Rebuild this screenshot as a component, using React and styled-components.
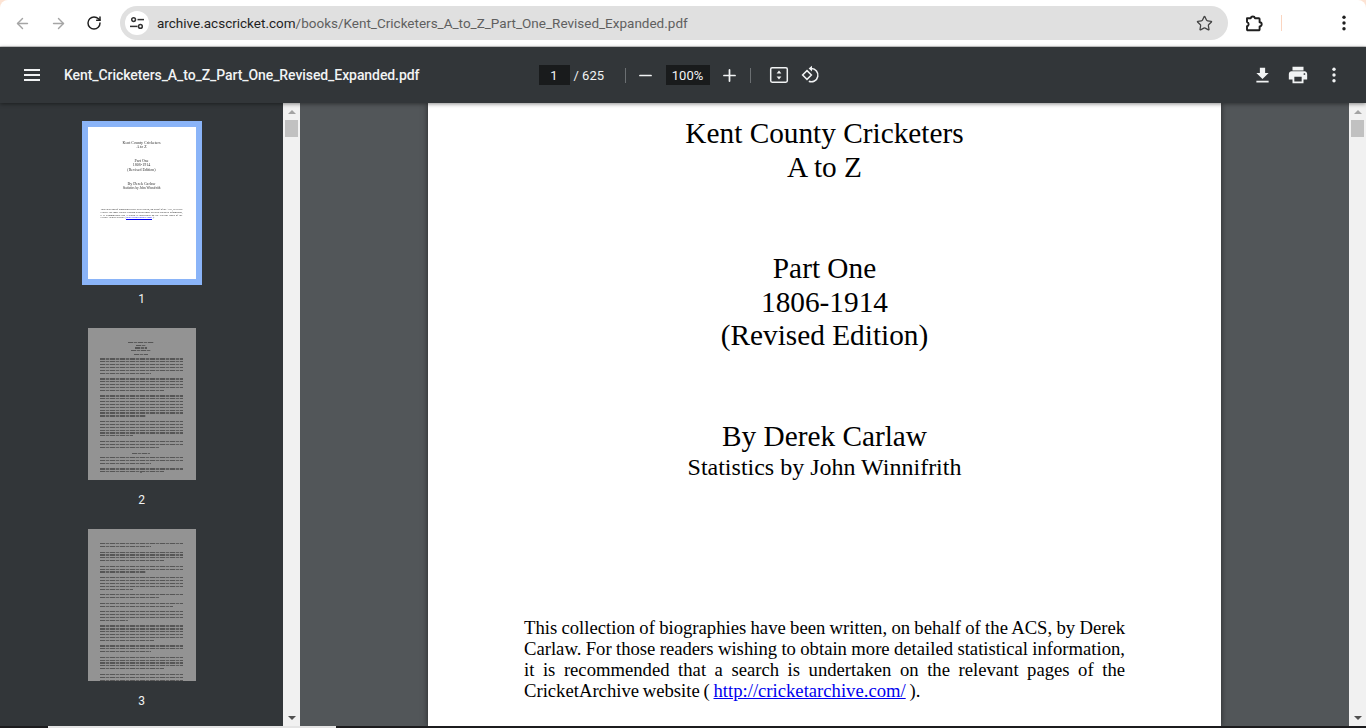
import React from 'react';
import styled, { createGlobalStyle } from 'styled-components';
import { ArrowLeft, ArrowRight, RotateCw, Star, Minus, Plus } from 'lucide-react';

const Global = createGlobalStyle`
  html, body { margin: 0; height: 100%; overflow: hidden; background: #fde3d3; }
  a { color: #0000ee; }
`;

const Shell = styled.div`
  width: 1366px;
  height: 728px;
  display: flex;
  flex-direction: column;
  overflow: hidden;
  font-family: "Roboto", "Liberation Sans", sans-serif;
`;

const BrowserBar = styled.div`
  height: 46px;
  flex: none;
  display: flex;
  align-items: center;
  background: #fff;
  border-bottom: 1px solid #d0d0d0;
  border-top-left-radius: 8px;
  border-top-right-radius: 8px;
`;

const NavButton = styled.div`
  width: 36px;
  height: 36px;
  flex: none;
  margin-left: ${p => p.$ml || 0}px;
  display: flex;
  align-items: center;
  justify-content: center;
  color: ${p => (p.$dim ? '#a5a5a5' : '#1f1f1f')};
`;

const NavGroup = styled.div`
  display: flex;
  padding-left: 4px;
`;

const Omnibox = styled.div`
  width: 1108px;
  height: 34px;
  margin-left: 8px;
  border-radius: 17px;
  background: #e0e0e0;
  display: flex;
  align-items: center;
  padding: 0 15px 0 5px;
  box-sizing: border-box;
`;

const SiteChip = styled.div`
  width: 24px;
  height: 24px;
  border-radius: 50%;
  background: #fff;
  display: flex;
  align-items: center;
  justify-content: center;
  flex: none;
`;

const Url = styled.div`
  margin-left: 8px;
  font-size: 13.5px;
  color: #5f5f5f;
  flex: 1;
  white-space: nowrap;
  b { font-weight: 400; color: #1f1f1f; }
`;

const BrowserEnd = styled.div`
  display: flex;
  align-items: center;
  flex: 1;
`;

const ProfileMark = styled.div`
  width: 1px;
  height: 16px;
  background: #fbd5c0;
  margin-left: 9px;
  margin-right: 54px;
`;

const PdfBar = styled.div`
  height: 56px;
  flex: none;
  background: #323639;
  color: #fff;
  display: grid;
  grid-template-columns: 1fr auto 1fr;
  align-items: center;
  position: relative;
  z-index: 2;
  box-shadow: 0 1px 4px rgba(0, 0, 0, 0.45);
`;

const TitleBlock = styled.div`
  display: flex;
  align-items: center;
  padding-left: 24px;
`;

const Title = styled.div`
  margin-left: 24px;
  font-size: 14px;
  font-weight: 500;
  letter-spacing: -0.08px;
  color: #f1f3f4;
  white-space: nowrap;
`;

const Controls = styled.div`
  display: flex;
  align-items: center;
  margin-right: 4px;
  font-size: 13px;
  color: #f1f3f4;
`;

const NumBox = styled.div`
  width: ${p => p.$w}px;
  height: 20px;
  background: #191b1c;
  display: flex;
  align-items: center;
  justify-content: center;
  font-size: 13px;
  color: #f1f3f4;
`;

const Total = styled.div`
  margin-left: 4px;
  width: 51px;
  white-space: nowrap;
`;

const Rule = styled.div`
  width: 1px;
  height: 15px;
  background: #6b6f72;
`;

const IconSlot = styled.div`
  width: ${p => p.$w || 36}px;
  height: 36px;
  margin-left: ${p => p.$ml || 0}px;
  display: flex;
  align-items: center;
  justify-content: center;
  flex: none;
  color: #f1f3f4;
`;

const Actions = styled.div`
  display: flex;
  justify-content: flex-end;
  align-items: center;
  padding-right: 14px;
`;

const Body = styled.div`
  flex: 1;
  min-height: 0;
  display: flex;
  position: relative;
`;

const Sidebar = styled.div`
  width: 283px;
  flex: none;
  background: #323639;
  display: flex;
  flex-direction: column;
  align-items: center;
  padding-top: 18px;
  box-sizing: border-box;
  overflow: hidden;
`;

const ThumbItem = styled.div`
  display: flex;
  flex-direction: column;
  align-items: center;
  margin-bottom: 15px;
  color: #f1f3f4;
  font-size: 12px;
  line-height: 16px;
`;

const ThumbFrame = styled.div`
  padding: 6px;
  background: ${p => (p.$active ? '#8ab4f8' : 'transparent')};
  margin-bottom: 6px;
`;

const Thumb = styled.div`
  width: 108px;
  height: 152px;
  box-sizing: border-box;
  background: ${p => (p.$active ? '#fff' : '#939393')};
  font-family: "Liberation Serif", serif;
  color: #333;
  overflow: hidden;
`;

const MiniCenter = styled.div`
  text-align: center;
  font-size: 4px;
  line-height: 4.57px;
  margin-top: ${p => p.$top}px;
  white-space: nowrap;
  filter: blur(0.25px);
`;

const MiniSub = styled.span`
  font-size: 3.3px;
`;

const MiniPara = styled.div`
  margin: 18px 13px 0;
  font-size: 2.54px;
  line-height: 2.86px;
  word-spacing: -0.12px;
  text-align: justify;
  color: #222;
  filter: blur(0.2px);
  a {
    color: #0000ee;
    text-decoration: none;
    border-bottom: 0.8px solid #0000ee;
  }
`;

const Lines = styled.div`
  height: 100%;
  box-sizing: border-box;
  padding: 14px 13px 0 12px;
  display: flex;
  flex-direction: column;
  filter: blur(0.55px);
`;

const TextLine = styled.div`
  height: 1.2px;
  flex: none;
  margin-top: ${p => p.$gap}px;
  width: ${p => p.$w}%;
  align-self: ${p => (p.$center ? 'center' : 'flex-start')};
  background: repeating-linear-gradient(90deg, #565656 0 5px, #828282 5px 6px, #5e5e5e 6px 9px, #828282 9px 10px);
`;

const PageNumber = styled.div`
  width: 2px;
  height: 1.2px;
  background: #666;
  align-self: center;
  margin-top: auto;
  margin-bottom: 7px;
`;

const Scrollbar = styled.div`
  width: 17px;
  flex: none;
  background: #f1f1f1;
  display: flex;
  flex-direction: column;
  align-items: center;
`;

const ScrollThumb = styled.div`
  width: 13px;
  height: 17px;
  background: #c1c1c1;
`;

const ScrollArrow = styled.div`
  width: 0;
  height: 0;
  border-left: 4px solid transparent;
  border-right: 4px solid transparent;
  ${p => (p.$down
    ? 'border-top: 4px solid #505050; margin-top: auto; margin-bottom: 6px;'
    : 'border-bottom: 4px solid #a3a3a3; margin-top: 7px; margin-bottom: 6px;')}
`;

const Viewer = styled.div`
  flex: 1;
  background: #525659;
  display: flex;
  justify-content: center;
  overflow: hidden;
`;

const Page = styled.div`
  width: 793px;
  flex: none;
  background: #fff;
  box-shadow: 0 0 6px rgba(0, 0, 0, 0.55);
  font-family: "Liberation Serif", serif;
  color: #000;
  box-sizing: border-box;
  padding: 14px 96px 0;
  text-align: center;
`;

const Heading = styled.div`
  font-size: 29.3px;
  line-height: 33.6px;
  margin-top: ${p => p.$top || 0}px;
`;

const SubHeading = styled.div`
  font-size: 24px;
  line-height: 28px;
  margin-top: -1px;
`;

const Para = styled.p`
  margin: 136px 0 0;
  font-size: 18.67px;
  line-height: 21px;
  word-spacing: -0.9px;
  text-align: justify;
`;

const BottomStrip = styled.div`
  height: 2px;
  flex: none;
  background: #1c1c1e;
  position: relative;
  z-index: 3;
`;

const BottomTab = styled.div`
  width: 288px;
  height: 2px;
  margin-left: 48px;
  background: #e4e4e4;
`;

const SliderIcon = () => (
  <svg width="16" height="16" viewBox="0 0 16 16" fill="none" stroke="#333" strokeWidth="1.5">
    <circle cx="4.6" cy="4.6" r="1.9" />
    <path d="M8.5 4.6H15" />
    <circle cx="11.4" cy="11.4" r="1.9" />
    <path d="M1 11.4h7.5" />
  </svg>
);

const PuzzleIcon = () => (
  <svg width="20" height="20" viewBox="0 0 20 20" fill="none" stroke="#1f1f1f" strokeWidth="1.9" strokeLinejoin="round">
    <path d="M3 5.2h3.7a2.2 2.2 0 0 1 4.3 0h3.8a.8.8 0 0 1 .8.8v3.2a2.1 2.1 0 0 1 0 4.2v3a.8.8 0 0 1-.8.8H3.8a.8.8 0 0 1-.8-.8v-3.2a2.1 2.1 0 0 0 0-4.1z" />
  </svg>
);

const DotsIcon = ({ color }) => (
  <svg width="16" height="16" viewBox="0 0 16 16" fill={color}>
    <circle cx="8" cy="2.3" r="1.7" />
    <circle cx="8" cy="8" r="1.7" />
    <circle cx="8" cy="13.7" r="1.7" />
  </svg>
);

const MenuIcon = () => (
  <svg width="16" height="12" viewBox="0 0 16 12" fill="#f1f3f4">
    <rect y="0" width="16" height="2" />
    <rect y="5" width="16" height="2" />
    <rect y="10" width="16" height="2" />
  </svg>
);

const DownloadIcon = () => (
  <svg width="21" height="21" viewBox="0 0 24 24" fill="currentColor">
    <path d="M19 9h-4V3H9v6H5l7 7 7-7zM5 18v2h14v-2H5z" />
  </svg>
);

const PrintIcon = () => (
  <svg width="22" height="22" viewBox="0 0 24 24" fill="currentColor">
    <path d="M19 8H5c-1.66 0-3 1.34-3 3v6h4v4h12v-4h4v-6c0-1.66-1.34-3-3-3zm-3 11H8v-5h8v5zm3-7c-.55 0-1-.45-1-1s.45-1 1-1 1 .45 1 1-.45 1-1 1zm-1-9H6v4h12V3z" />
  </svg>
);

const FitIcon = () => (
  <svg width="20" height="20" viewBox="0 0 20 20" fill="none" stroke="currentColor" strokeWidth="1.5">
    <rect x="1.7" y="2.8" width="16.6" height="14.4" rx="1.4" />
    <path d="M10 5.4l2.4 3h-4.8zM10 14.6l2.4-3h-4.8z" fill="currentColor" stroke="none" />
  </svg>
);

const RotateIcon = () => (
  <svg width="20" height="20" viewBox="0 0 20 20" fill="none" stroke="currentColor" strokeWidth="1.5">
    <path d="M6 5.6L10.4 10 6 14.4 1.6 10z" />
    <path d="M10.4 3.6a6.6 6.6 0 1 1-2.6 12.7" />
    <path d="M11 0.8L7.6 3.6 11 6.4z" fill="currentColor" stroke="none" />
  </svg>
);

// line counts per paragraph, the last line of each one runs short
const tails = [62, 78, 56, 40, 72, 88, 34, 66];

const Paragraphs = ({ counts, first = 3 }) =>
  counts.map((n, i) =>
    Array.from({ length: n }, (_, k) => (
      <TextLine
        key={`${i}-${k}`}
        $gap={k === 0 ? (i === 0 ? first : 4.5) : 1.66}
        $w={k === n - 1 ? tails[i % tails.length] : 100}
      />
    ))
  );

const SecondThumb = () => (
  <Thumb>
    <Lines>
      <TextLine $center $gap={0} $w={32} />
      <TextLine $center $gap={1.5} $w={12} />
      <TextLine $center $gap={1.5} $w={14} />
      <TextLine $center $gap={1.5} $w={24} />
      <TextLine $center $gap={3} $w={18} />
      <Paragraphs counts={[6, 5, 8, 6, 3]} first={3} />
      <TextLine $center $gap={5} $w={22} />
      <Paragraphs counts={[3, 2]} first={3} />
      <PageNumber />
    </Lines>
  </Thumb>
);

const ThirdThumb = () => (
  <Thumb>
    <Lines>
      <Paragraphs counts={[2, 4, 3, 5, 2, 2, 4, 6, 3, 5, 4]} first={0} />
      <PageNumber />
    </Lines>
  </Thumb>
);

const FirstThumb = () => (
  <Thumb $active>
    <MiniCenter $top={13.7}>Kent County Cricketers<br />A to Z</MiniCenter>
    <MiniCenter $top={9.1}>Part One<br />1806-1914<br />(Revised Edition)</MiniCenter>
    <MiniCenter $top={9.1}>By Derek Carlaw<br /><MiniSub>Statistics by John Winnifrith</MiniSub></MiniCenter>
    <MiniPara>
      This collection of biographies have been written, on behalf of the ACS, by Derek Carlaw. For those readers wishing to obtain more detailed statistical information, it is recommended that a search is undertaken on the relevant pages of the CricketArchive website ( <a href="#">http://cricketarchive.com/</a> ).
    </MiniPara>
  </Thumb>
);

const ScrollColumn = () => (
  <Scrollbar>
    <ScrollArrow />
    <ScrollThumb />
    <ScrollArrow $down />
  </Scrollbar>
);

export default function App() {
  return (
    <Shell>
      <Global />
      <BrowserBar>
        <NavGroup>
          <NavButton $dim><ArrowLeft size={17} strokeWidth={2} /></NavButton>
          <NavButton $dim><ArrowRight size={17} strokeWidth={2} /></NavButton>
          <NavButton><RotateCw size={16} strokeWidth={2.2} /></NavButton>
        </NavGroup>
        <Omnibox>
          <SiteChip><SliderIcon /></SiteChip>
          <Url><b>archive.acscricket.com</b>/books/Kent_Cricketers_A_to_Z_Part_One_Revised_Expanded.pdf</Url>
          <Star size={17} color="#444" strokeWidth={1.8} />
        </Omnibox>
        <BrowserEnd>
          <NavButton $ml={8}><PuzzleIcon /></NavButton>
          <ProfileMark />
          <DotsIcon color="#1f1f1f" />
        </BrowserEnd>
      </BrowserBar>

      <PdfBar>
        <TitleBlock>
          <MenuIcon />
          <Title>Kent_Cricketers_A_to_Z_Part_One_Revised_Expanded.pdf</Title>
        </TitleBlock>
        <Controls>
          <NumBox $w={31}>1</NumBox>
          <Total>/ 625</Total>
          <Rule />
          <IconSlot $w={40}><Minus size={19} strokeWidth={2.2} /></IconSlot>
          <NumBox $w={44}>100%</NumBox>
          <IconSlot $w={40}><Plus size={19} strokeWidth={2.2} /></IconSlot>
          <Rule />
          <IconSlot $w={26} $ml={15}><FitIcon /></IconSlot>
          <IconSlot $w={26} $ml={6}><RotateIcon /></IconSlot>
        </Controls>
        <Actions>
          <IconSlot><DownloadIcon /></IconSlot>
          <IconSlot><PrintIcon /></IconSlot>
          <IconSlot><DotsIcon color="#f1f3f4" /></IconSlot>
        </Actions>
      </PdfBar>

      <Body>
        <Sidebar>
          <ThumbItem>
            <ThumbFrame $active><FirstThumb /></ThumbFrame>
            1
          </ThumbItem>
          <ThumbItem>
            <ThumbFrame><SecondThumb /></ThumbFrame>
            2
          </ThumbItem>
          <ThumbItem>
            <ThumbFrame><ThirdThumb /></ThumbFrame>
            3
          </ThumbItem>
        </Sidebar>
        <ScrollColumn />
        <Viewer>
          <Page>
            <Heading>Kent County Cricketers<br />A to Z</Heading>
            <Heading $top={68}>Part One<br />1806-1914<br />(Revised Edition)</Heading>
            <Heading $top={67}>By Derek Carlaw</Heading>
            <SubHeading>Statistics by John Winnifrith</SubHeading>
            <Para>
              This collection of biographies have been written, on behalf of the ACS, by Derek Carlaw. For those readers wishing to obtain more detailed statistical information, it is recommended that a search is undertaken on the relevant pages of the CricketArchive website ( <a href="#">http://cricketarchive.com/</a> ).
            </Para>
          </Page>
        </Viewer>
        <ScrollColumn />
      </Body>
      <BottomStrip><BottomTab /></BottomStrip>
    </Shell>
  );
}
